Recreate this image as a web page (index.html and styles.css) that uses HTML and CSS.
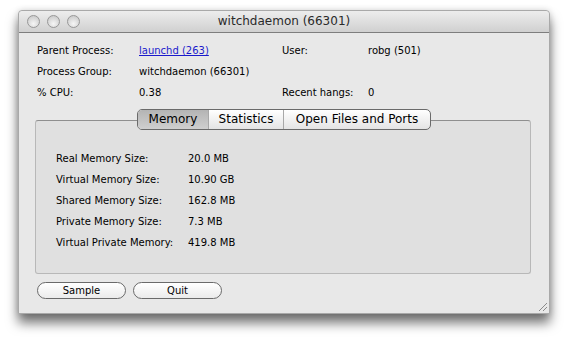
FILE: index.html
```html
<!DOCTYPE html>
<html lang="en">
<head>
<meta charset="UTF-8">
<title>witchdaemon (66301)</title>
<link rel="stylesheet" href="styles.css">
</head>
<body>
<div class="window">
    <div class="titlebar">
        <div class="lights">
            <span class="light"></span>
            <span class="light"></span>
            <span class="light"></span>
        </div>
        <div class="title">witchdaemon (66301)</div>
    </div>
    <div class="content">
        <div class="info">
            <div class="label">Parent Process:</div>
            <div class="value"><a href="#">launchd (263)</a></div>
            <div class="label">User:</div>
            <div class="value">robg (501)</div>
            <div class="label">Process Group:</div>
            <div class="value">witchdaemon (66301)</div>
            <div></div>
            <div></div>
            <div class="label">% CPU:</div>
            <div class="value">0.38</div>
            <div class="label">Recent hangs:</div>
            <div class="value">0</div>
        </div>

        <div class="tabview">
            <div class="tabs">
                <div class="tab selected">Memory</div>
                <div class="tab">Statistics</div>
                <div class="tab">Open Files and Ports</div>
            </div>
            <div class="panel">
                <div class="mem">
                    <div>Real Memory Size:</div><div>20.0 MB</div>
                    <div>Virtual Memory Size:</div><div>10.90 GB</div>
                    <div>Shared Memory Size:</div><div>162.8 MB</div>
                    <div>Private Memory Size:</div><div>7.3 MB</div>
                    <div>Virtual Private Memory:</div><div>419.8 MB</div>
                </div>
            </div>
        </div>

        <div class="buttons">
            <button class="btn">Sample</button>
            <button class="btn">Quit</button>
        </div>
    </div>
    <div class="grip"></div>
</div>
</body>
</html>
```

FILE: styles.css
```css
html {
    background: #fff;
}

body {
    margin: 0;
    min-height: 344px;
    padding: 10px 0 0 18px;
    box-sizing: border-box;
    font-family: "DejaVu Sans", sans-serif;
    font-size: 10px;
    color: #000;
}

.window {
    position: relative;
    width: 532px;
    height: 304px;
    background: #e8e8e8;
    border: 1px solid #a9a9a9;
    border-radius: 4px 4px 0 0;
    box-shadow: 0 9px 12px rgba(0, 0, 0, 0.55), 0 0 6px rgba(0, 0, 0, 0.15);
    box-sizing: border-box;
}

.titlebar {
    position: relative;
    height: 21px;
    background: linear-gradient(#ededed, #d0d0d0);
    border-bottom: 1px solid #7e7e7e;
    border-radius: 4px 4px 0 0;
}

.lights {
    display: flex;
    gap: 7px;
    padding: 4px 0 0 8px;
}

.light {
    width: 13px;
    height: 13px;
    border-radius: 50%;
    background: radial-gradient(circle at 50% 70%, #f6f6f6, #c2c2c2);
    border: 1px solid #989898;
    box-sizing: border-box;
}

.title {
    position: absolute;
    top: 3px;
    left: 0;
    right: 0;
    text-align: center;
    font-size: 12px;
    color: #2a2a2a;
}

.content {
    padding: 9px 18px 0 16px;
}

.info {
    display: grid;
    grid-template-columns: 102px 143px 86px auto;
    padding-left: 2px;
}

.info > div {
    height: 21px;
    line-height: 18px;
}

.info a {
    color: #1a1acc;
}

.tabview {
    margin-top: 4px;
}

.tabs {
    display: flex;
    margin-left: 102px;
    width: 292px;
    height: 19px;
    border: 1px solid #6a6a6a;
    border-radius: 5px;
    overflow: hidden;
    background: linear-gradient(#ffffff, #e4e4e4);
    position: relative;
    z-index: 1;
    font-size: 12px;
}

.tab {
    line-height: 19px;
    text-align: center;
    border-left: 1px solid #a8a8a8;
}

.tab:nth-child(1) {
    width: 70px;
    border-left: none;
}

.tab:nth-child(2) {
    width: 74px;
}

.tab:nth-child(3) {
    flex: 1;
}

.tab.selected {
    background: linear-gradient(#b4b4b4, #cfcfcf);
}

.panel {
    margin-top: -10px;
    height: 154px;
    background: #e0e0e0;
    border: 1px solid #b8b8b8;
    border-top-color: #8f8f8f;
    border-radius: 3px;
    box-sizing: border-box;
}

.mem {
    display: grid;
    grid-template-columns: 132px auto;
    padding: 29px 0 0 20px;
}

.mem > div {
    height: 21px;
    line-height: 18px;
}

.buttons {
    display: flex;
    gap: 7px;
    margin-top: 8px;
    padding-left: 2px;
}

.btn {
    width: 89px;
    height: 17px;
    padding: 0;
    font-family: inherit;
    font-size: 10px;
    color: #000;
    background: linear-gradient(#ffffff, #ebebeb);
    border: 1px solid #6a6a6a;
    border-radius: 9px;
}

.grip {
    position: absolute;
    right: 2px;
    bottom: 2px;
    width: 10px;
    height: 10px;
    background: repeating-linear-gradient(135deg, transparent 0 2px, #8a8a8a 2px 3px);
    clip-path: polygon(100% 0, 100% 100%, 0 100%);
}
```
